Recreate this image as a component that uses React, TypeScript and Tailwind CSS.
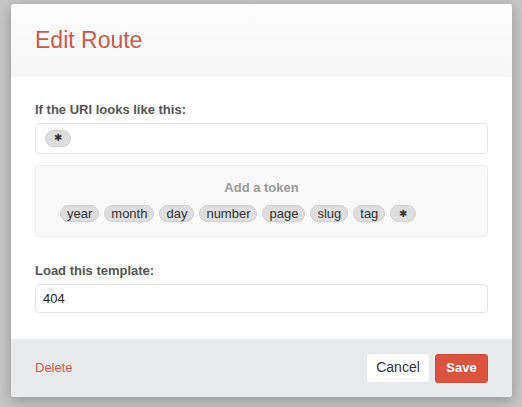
import React from "react";

const tokens = ["year", "month", "day", "number", "page", "slug", "tag", "✱"];

function Pill({ children, small }: { children: React.ReactNode; small?: boolean }) {
  return (
    <span
      className={
        small
          ? "inline-flex h-[17px] items-center rounded-full border border-[#cfcfcf] bg-[#dedede] px-[8px] text-[10px] leading-none text-[#333]"
          : "inline-flex h-[17px] items-center rounded-full border border-[#cfcfcf] bg-[#dedede] px-[6px] text-[13px] leading-none text-[#333]"
      }
    >
      {children}
    </span>
  );
}

export default function App() {
  return (
    <div
      className="h-[407px] w-[522px] overflow-hidden bg-[#c6c6c6] pl-[11px] pt-[4px]"
      style={{ fontFamily: '"Liberation Sans", Arial, sans-serif' }}
    >
      <div className="flex h-[393px] w-[501px] flex-col overflow-hidden rounded-[3px] bg-white shadow-[0_4px_14px_rgba(0,0,0,0.25)]">
        <div className="flex h-[73px] items-center bg-gradient-to-b from-[#fdfdfd] to-[#f6f6f6] px-[24px]">
          <h1 className="text-[23px] font-normal text-[#c95a4f]">Edit Route</h1>
        </div>
        <div className="flex flex-1 flex-col px-[24px] pt-[23px]">
          <label className="text-[13px] font-bold text-[#555]">If the URI looks like this:</label>
          <div className="mt-[3px] flex h-[31px] items-center rounded-[4px] border border-[#e6e6e6] px-[9px]">
            <Pill small>✱</Pill>
          </div>
          <div className="mt-[11px] flex h-[72px] flex-col rounded-[4px] border border-[#ececec] bg-[#f9f9f9] pl-[24px]">
            <div className="mt-[12px] pr-[24px] text-center text-[13px] font-bold text-[#9a9a9a]">Add a token</div>
            <div className="mt-[8px] flex gap-[5px]">
              {tokens.map((t) => (
                <Pill key={t} small={t === "✱"}>
                  {t}
                </Pill>
              ))}
            </div>
          </div>
          <label className="mt-[24px] text-[13px] font-bold text-[#555]">Load this template:</label>
          <div className="mt-[4px] flex h-[29px] items-center rounded-[4px] border border-[#e6e6e6] px-[7px] text-[13px] text-[#222]">
            404
          </div>
        </div>
        <div className="flex h-[58px] items-center justify-between bg-[#e9eaeb] px-[24px]">
          <span className="text-[13px] text-[#d9584b]">Delete</span>
          <div className="flex gap-[6px]">
            <button className="h-[28px] w-[62px] rounded-[3px] bg-white text-[14px] text-[#333]">Cancel</button>
            <button className="h-[29px] w-[53px] rounded-[3px] border border-[#c8483a] bg-[#d9533f] text-[13px] font-bold text-white">
              Save
            </button>
          </div>
        </div>
      </div>
    </div>
  );
}
